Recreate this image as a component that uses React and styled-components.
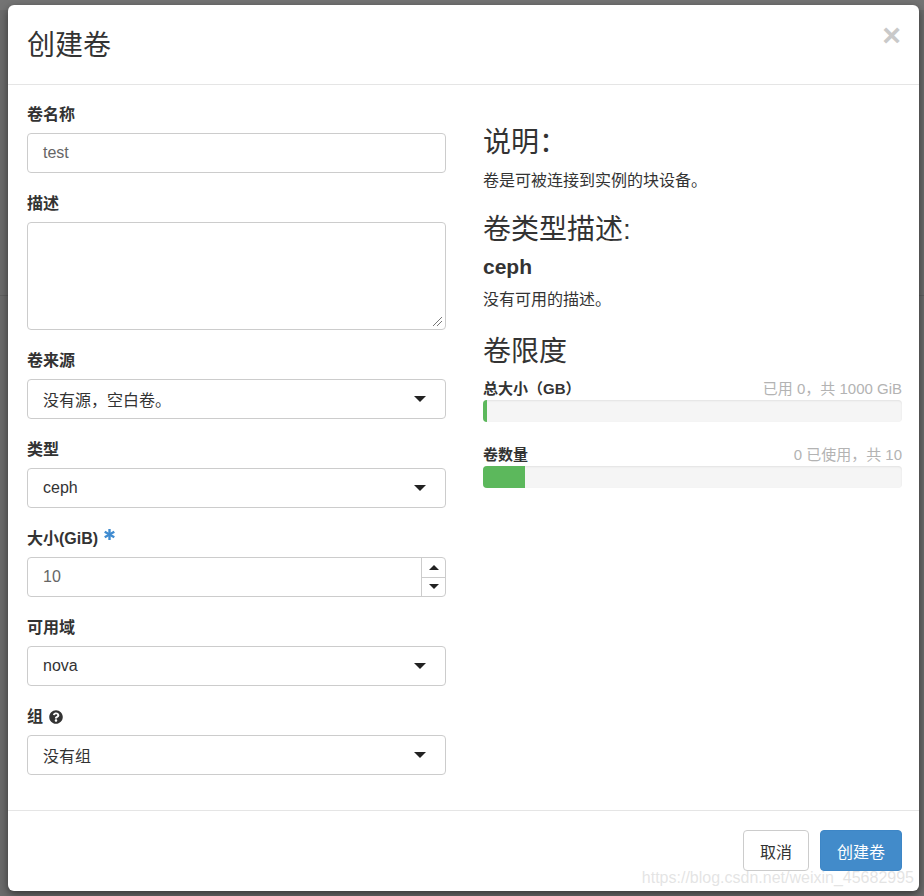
import styled, { createGlobalStyle } from "styled-components"
import { FaQuestionCircle } from "react-icons/fa"

const GlobalStyle = createGlobalStyle`
  html, body {
    margin: 0;
    padding: 0;
  }
  body {
    background: #6b6b6b;
    font-family: "Liberation Sans", "Noto Sans CJK SC", sans-serif;
    color: #333;
  }
  * {
    box-sizing: border-box;
  }
`

const Backdrop = styled.div`
  min-height: 896px;
  padding: 5px 5px 5px 8px;
  background:
    linear-gradient(#747474, #747474) 0 0 / 100% 10px no-repeat,
    linear-gradient(#5f5f5f, #5f5f5f) 0 295px / 100% 1px no-repeat,
    #6b6b6b;
`

const Modal = styled.div`
  position: relative;
  width: 911px;
  height: 886px;
  background: #fff;
  border-radius: 6px;
  box-shadow: 0 3px 9px rgba(0, 0, 0, 0.5);
  display: flex;
  flex-direction: column;
  overflow: hidden;
`

const Header = styled.div`
  height: 80px;
  padding: 4px 17px 0 19px;
  border-bottom: 1px solid #e5e5e5;
  display: flex;
  align-items: center;
  justify-content: space-between;
`

const Title = styled.h3`
  margin: 0;
  font-size: 28px;
  line-height: 1.1;
  font-weight: 400;
  color: #333;
`

const Close = styled.span`
  font-size: 32px;
  font-weight: 700;
  line-height: 1;
  color: #c9c9c9;
  margin-top: -24px;
  margin-right: 1px;
`

const Body = styled.div`
  padding: 20px 17px 14px 19px;
  display: grid;
  grid-template-columns: 419px 419px;
  column-gap: 37px;
  flex: 1;
`

const Column = styled.div`
  display: flex;
  flex-direction: column;
`

const FormGroup = styled.div`
  margin-bottom: 21px;
`

const Label = styled.label`
  display: flex;
  align-items: center;
  gap: 6px;
  font-size: 16px;
  font-weight: 700;
  line-height: 20px;
  margin-bottom: 8px;
  color: #333;
`

const Field = styled.div`
  height: ${(p) => p.$h || 40}px;
  border: 1px solid #ccc;
  border-radius: 4px;
  padding: 0 0 0 15px;
  display: flex;
  align-items: center;
  justify-content: space-between;
  font-size: 16px;
  color: ${(p) => (p.$muted ? "#666" : "#333")};
  position: relative;
  overflow: hidden;
`

const Caret = styled.span`
  width: 0;
  height: 0;
  border-left: 6px solid transparent;
  border-right: 6px solid transparent;
  border-top: 6px solid #222;
  margin-right: 19px;
`

const Spinner = styled.div`
  align-self: stretch;
  width: 24px;
  border-left: 1px solid #ccc;
  display: flex;
  flex-direction: column;
`

const SpinBtn = styled.div`
  flex: 1;
  display: flex;
  align-items: center;
  justify-content: center;
  border-top: ${(p) => (p.$down ? "1px solid #ccc" : "none")};

  &::after {
    content: "";
    width: 0;
    height: 0;
    border-left: 5px solid transparent;
    border-right: 5px solid transparent;
    ${(p) =>
      p.$down ? "border-top: 5px solid #222;" : "border-bottom: 5px solid #222;"}
  }
`

const Grip = styled.svg`
  position: absolute;
  right: 3px;
  bottom: 3px;
`

const Heading = styled.h3`
  margin: ${(p) => p.$mt}px 0 ${(p) => p.$mb}px;
  font-size: 28px;
  line-height: 31px;
  font-weight: 400;
  color: #333;
`

const TypeName = styled.h4`
  margin: 0 0 11px;
  font-size: 21px;
  line-height: 24px;
  font-weight: 700;
  color: #333;
`

const Text = styled.p`
  margin: 0;
  font-size: 16px;
  line-height: 20px;
  color: #333;
`

const QuotaRow = styled.div`
  display: flex;
  justify-content: space-between;
  align-items: center;
  line-height: 20px;
  font-size: 15px;
  margin-top: ${(p) => p.$mt}px;
`

const QuotaName = styled.span`
  font-weight: 700;
  color: #333;
`

const QuotaValue = styled.span`
  color: #b3b3b3;
`

const Bar = styled.div`
  margin-top: 1px;
  height: 22px;
  background: #f5f5f5;
  border-radius: 4px;
  box-shadow: inset 0 1px 2px rgba(0, 0, 0, 0.08);
  overflow: hidden;
`

const BarFill = styled.div`
  height: 100%;
  background: #5cb85c;
`

const Footer = styled.div`
  border-top: 1px solid #e5e5e5;
  padding: 19px 17px 20px 19px;
  display: flex;
  justify-content: flex-end;
  gap: 11px;
`

const Button = styled.button`
  height: 41px;
  padding: 0 16px;
  border-radius: 4px;
  font-family: inherit;
  font-size: 16px;
  border: 1px solid ${(p) => (p.$primary ? "#3d86c6" : "#ccc")};
  background: ${(p) => (p.$primary ? "#428bca" : "#fff")};
  color: ${(p) => (p.$primary ? "#fff" : "#333")};
`

const Watermark = styled.span`
  position: absolute;
  right: 5px;
  bottom: 4px;
  font-size: 16px;
  color: rgba(210, 210, 210, 0.6);
  pointer-events: none;
`

const Asterisk = () => (
  <svg width="11" height="11" viewBox="0 0 12 12" style={{ marginTop: -10 }}>
    <g stroke="#3f8bd0" strokeWidth="2.6" strokeLinecap="butt">
      <line x1="6" y1="0" x2="6" y2="12" />
      <line x1="0.8" y1="3" x2="11.2" y2="9" />
      <line x1="0.8" y1="9" x2="11.2" y2="3" />
    </g>
  </svg>
)

const Select = ({ children }) => (
  <Field>
    <span>{children}</span>
    <Caret />
  </Field>
)

const quotas = [
  { name: "总大小（GB）", value: "已用 0，共 1000 GiB", pct: 1, mt: 12 },
  { name: "卷数量", value: "0 已使用，共 10", pct: 10, mt: 23 },
]

export default function App() {
  return (
    <>
      <GlobalStyle />
      <Backdrop>
        <Modal>
          <Header>
            <Title>创建卷</Title>
            <Close>×</Close>
          </Header>
          <Body>
            <Column>
              <FormGroup>
                <Label>卷名称</Label>
                <Field $muted>test</Field>
              </FormGroup>
              <FormGroup>
                <Label>描述</Label>
                <Field $h={108}>
                  <Grip width="10" height="10" viewBox="0 0 10 10">
                    <g stroke="#777" strokeWidth="1">
                      <line x1="1" y1="10" x2="10" y2="1" />
                      <line x1="5" y1="10" x2="10" y2="5" />
                    </g>
                  </Grip>
                </Field>
              </FormGroup>
              <FormGroup>
                <Label>卷来源</Label>
                <Select>没有源，空白卷。</Select>
              </FormGroup>
              <FormGroup>
                <Label>类型</Label>
                <Select>ceph</Select>
              </FormGroup>
              <FormGroup>
                <Label>
                  大小(GiB) <Asterisk />
                </Label>
                <Field $muted>
                  <span>10</span>
                  <Spinner>
                    <SpinBtn />
                    <SpinBtn $down />
                  </Spinner>
                </Field>
              </FormGroup>
              <FormGroup>
                <Label>可用域</Label>
                <Select>nova</Select>
              </FormGroup>
              <FormGroup>
                <Label>
                  组 <FaQuestionCircle size={14} color="#333" />
                </Label>
                <Select>没有组</Select>
              </FormGroup>
            </Column>
            <Column>
              <Heading $mt={22} $mb={13}>说明：</Heading>
              <Text>卷是可被连接到实例的块设备。</Text>
              <Heading $mt={23} $mb={10}>卷类型描述:</Heading>
              <TypeName>ceph</TypeName>
              <Text>没有可用的描述。</Text>
              <Heading $mt={26} $mb={0}>卷限度</Heading>
              {quotas.map((q) => (
                <div key={q.name}>
                  <QuotaRow $mt={q.mt}>
                    <QuotaName>{q.name}</QuotaName>
                    <QuotaValue>{q.value}</QuotaValue>
                  </QuotaRow>
                  <Bar>
                    <BarFill style={{ width: `${q.pct}%` }} />
                  </Bar>
                </div>
              ))}
            </Column>
          </Body>
          <Footer>
            <Button>取消</Button>
            <Button $primary>创建卷</Button>
          </Footer>
          <Watermark>https://blog.csdn.net/weixin_45682995</Watermark>
        </Modal>
      </Backdrop>
    </>
  )
}
